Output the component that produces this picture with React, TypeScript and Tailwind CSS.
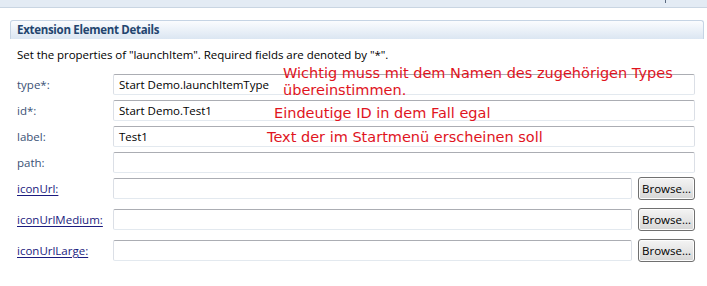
import React from "react";

const uiFont = { fontFamily: '"Open Sans", "Noto Sans", Arial, sans-serif' };
const redFont = { fontFamily: '"DejaVu Sans", Verdana, sans-serif' };

function TextBox({ value, className = "" }: { value?: string; className?: string }) {
  return (
    <div
      className={
        "h-[21px] flex items-center px-[5px] bg-white rounded-[2px] border border-t-[#abadb3] border-x-[#dbdfe6] border-b-[#e3e9ef] text-[11.5px] text-black " +
        className
      }
    >
      {value}
    </div>
  );
}

function BrowseButton() {
  return (
    <div className="w-[57px] h-[23px] flex items-center justify-center rounded-[3px] border border-[#707070] bg-gradient-to-b from-[#f4f4f4] via-[#e6e6e6] to-[#d6d6d6] text-[11.5px] text-black shadow-[inset_0_0_0_1px_#fcfcfc]">
      Browse...
    </div>
  );
}

export default function App() {
  const plainRows = [
    { label: "type*:", value: "Start Demo.launchItemType" },
    { label: "id*:", value: "Start Demo.Test1" },
    { label: "label:", value: "Test1" },
    { label: "path:", value: "" },
  ];
  const linkRows = ["iconUrl:", "iconUrlMedium:", "iconUrlLarge:"];

  return (
    <div className="relative w-[707px] h-[286px] bg-white overflow-hidden" style={uiFont}>
      <div className="h-[8px] bg-[#e3ebf4] border-b border-[#c9d5e2] relative">
        <div className="absolute left-[665px] top-0 w-px h-[3px] bg-[#5a6a80]" />
      </div>
      <div className="pl-[10px] pr-[3px] pt-[12px]">
        <div className="h-[19px] rounded-t-[3px] border-t border-x border-[#c6d4e4] bg-gradient-to-b from-[#fbfcfe] to-[#dbe6f2] flex items-center pl-[6px]">
          <span className="text-[11.5px] font-bold tracking-[-0.3px] text-[#23456f]">Extension Element Details</span>
        </div>
      </div>
      <div className="pl-[17px] pt-[8px] text-[11.5px] tracking-[-0.05px] text-black leading-[16px]">
        Set the properties of "launchItem". Required fields are denoted by "*".
      </div>
      <div className="pl-[17px] pr-[12px] pt-[11px] flex flex-col gap-[5px]">
        {plainRows.map((r) => (
          <div key={r.label} className="flex items-center">
            <div className="w-[96px] text-[11.5px] text-[#3a5175]">{r.label}</div>
            <TextBox value={r.value} className="flex-1" />
          </div>
        ))}
      </div>
      <div className="pl-[17px] pr-[12px] pt-[4px] flex flex-col gap-[8px]">
        {linkRows.map((l) => (
          <div key={l} className="flex items-center">
            <div className="w-[96px] text-[11.5px] text-[#1b1b7e] underline underline-offset-[2px]">{l}</div>
            <TextBox className="flex-1 mr-[6px]" />
            <BrowseButton />
          </div>
        ))}
      </div>

      {/* red annotations */}
      <div className="absolute left-[283px] top-[65px] text-[14.5px] leading-[17px] text-[#e0141e]" style={redFont}>
        Wichtig muss mit dem Namen des zugehörigen Types
        <br />
        übereinstimmen.
      </div>
      <div className="absolute left-[274px] top-[105px] text-[14.5px] leading-[17px] text-[#e0141e]" style={redFont}>
        Eindeutige ID in dem Fall egal
      </div>
      <div className="absolute left-[267px] top-[129px] text-[14.5px] leading-[17px] text-[#e0141e]" style={redFont}>
        Text der im Startmenü erscheinen soll
      </div>
    </div>
  );
}
